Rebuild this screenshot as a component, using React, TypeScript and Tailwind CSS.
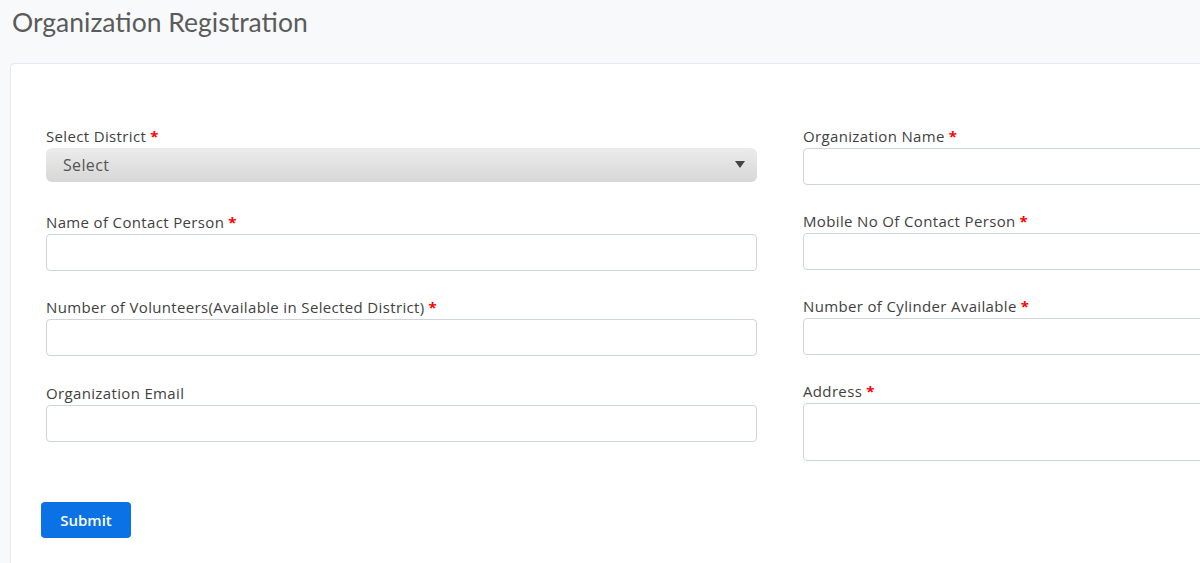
import React from 'react'

const Req = () => <span className="ml-[4px] font-bold text-[#ff0000]">*</span>

const inputCls =
  'block w-full h-[37px] rounded-[4px] border border-[#ced4da] bg-white px-3 text-[15px] outline-none'

const App: React.FC = () => {
  return (
    <div
      className="h-screen w-screen overflow-hidden bg-[#f8f9fa] text-[#3f3f3f]"
      style={{ fontFamily: '"Open Sans", "Noto Sans", sans-serif' }}
    >
      <div className="w-[1560px]">
        <h1
          className="pl-[12px] pt-[5px] text-[26.5px] leading-[34px] text-[#5b5b5b]"
          style={{ fontFamily: 'Lato, "Open Sans", sans-serif' }}
        >
          Organization Registration
        </h1>

        <div className="ml-[10px] mt-[24px] rounded-[4px] border border-[#e6e8eb] bg-white pl-[35px] pr-[36px] pt-[62px] pb-[30px]">
          <div className="grid grid-cols-[711px_711px] gap-x-[46px] text-[15px] leading-[20px] tracking-[0.35px]">
            {/* left column */}
            <div className="flex flex-col">
              <label className="mb-[2px]">
                Select District<Req />
              </label>
              <div className="relative mb-[30px] flex h-[34px] items-center rounded-[6px] bg-gradient-to-b from-[#ececec] to-[#d7d7d7] pl-[17px] text-[16px] text-[#555]">
                Select
                <span className="absolute right-[12px] top-[13px] h-0 w-0 border-x-[5px] border-t-[7px] border-x-transparent border-t-[#444]" />
              </div>

              <label className="mb-[2px]">
                Name of Contact Person<Req />
              </label>
              <input className={inputCls + ' mb-[26px]'} />

              <label className="mb-[2px]">
                Number of Volunteers(Available in Selected District)<Req />
              </label>
              <input className={inputCls + ' mb-[27px]'} />

              <label className="mb-[2px]">Organization Email</label>
              <input className={inputCls} />
            </div>

            {/* right column */}
            <div className="flex flex-col">
              <label className="mb-[2px]">
                Organization Name<Req />
              </label>
              <input className={inputCls + ' mb-[26px]'} />

              <label className="mb-[2px]">
                Mobile No Of Contact Person<Req />
              </label>
              <input className={inputCls + ' mb-[26px]'} />

              <label className="mb-[2px]">
                Number of Cylinder Available<Req />
              </label>
              <input className={inputCls + ' mb-[26px]'} />

              <label className="mb-[2px]">
                Address<Req />
              </label>
              <textarea className="block h-[58px] w-full resize-none rounded-[4px] border border-[#ced4da] bg-white px-3 outline-none" />
            </div>
          </div>

          <button className="mt-[41px] -ml-[5px] h-[36px] w-[90px] rounded-[4px] bg-[#0b72e6] text-[15px] font-semibold text-white">
            Submit
          </button>
        </div>
      </div>
    </div>
  )
}

export default App
